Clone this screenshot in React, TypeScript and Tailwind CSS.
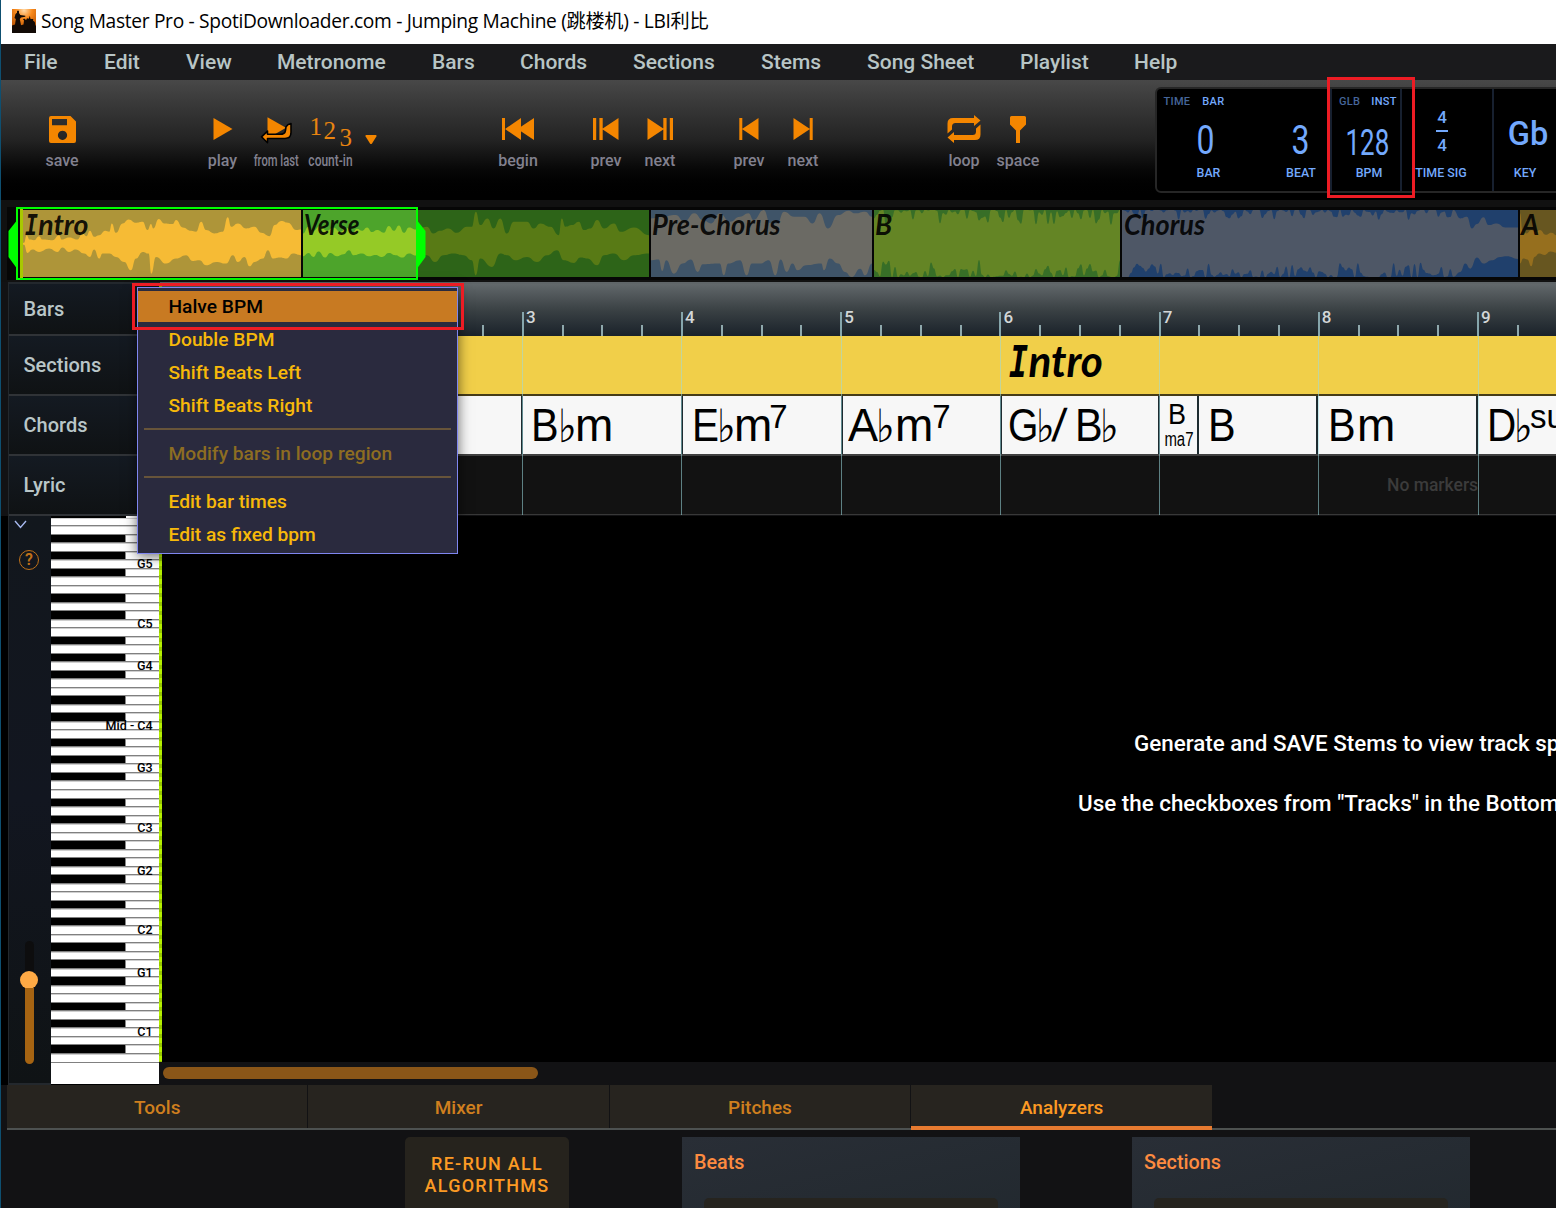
import type { ReactNode } from "react";

/* ---------- toolbar icons ---------- */

const SaveIcon = () => (
  <svg width="27" height="27" viewBox="0 0 27 27" className="fill-[#f48600]">
    <path fillRule="evenodd" d="M2 0h19.5L27 5.5V25a2 2 0 0 1-2 2H2a2 2 0 0 1-2-2V2a2 2 0 0 1 2-2zM3 3v6.3h15V3zM13.5 14.7a4.6 4.6 0 1 0 .01 0z" />
  </svg>
);

const PlayIcon = () => (
  <svg width="20" height="22" viewBox="0 0 20 22" className="fill-[#f48600]">
    <path d="M.5 0 19.5 11 .5 22z" />
  </svg>
);

const FromLastIcon = () => (
  <svg width="36" height="30" viewBox="0 0 36 30">
    <path d="M8.500 3.300 27 13.700 8.500 24.500z" fill="#f48600" />
    <path d="M2.500 22.800 8.500 17.100v3.200h12.500q5 0 5.500-4l.5-3.500q1.500-2.500 5-3.300v9q0 6-6 6H8.500v4.300z" fill="#f48600" stroke="#000" strokeWidth="1.600" strokeLinejoin="round" />
  </svg>
);

const BeginIcon = () => (
  <svg width="32" height="22" viewBox="0 0 32 22" className="fill-[#f48600]">
    <path d="M0 0h3v22H0zM3 11 19 0v22zM15.5 11 32 0v22z" />
  </svg>
);

const PrevSectionIcon = ({ flip = false }: { flip?: boolean }) => (
  <svg width="26" height="22" viewBox="0 0 26 22" className={flip ? "-scale-x-100 fill-[#f48600]" : "fill-[#f48600]"}>
    <path d="M0 0h3.2v22H0zM6.4 0h3.3v22H6.4zM9 11 25.5 0v22z" />
  </svg>
);

const PrevIcon = ({ flip = false }: { flip?: boolean }) => (
  <svg width="20" height="22" viewBox="0 0 20 22" className={flip ? "-scale-x-100 fill-[#f48600]" : "fill-[#f48600]"}>
    <path d="M.3 0h3v22h-3zM3 11 19.5 0v22z" />
  </svg>
);

const LoopIcon = () => (
  <svg width="34" height="28" viewBox="0 0 34 28" className="fill-[#f48600]">
    <path d="M.5 18.500V8.500q0-5.500 5.500-5.500H27V0l6.500 5.500L27 11V8H8.500q-3.500 0-3.500 3.500v3z" />
    <path d="M33.500 9.500v10q0 5.500-5.500 5.500H7v3L.5 22.500 7 17v3h18.500q3.500 0 3.500-3.500v-3z" />
  </svg>
);

const SpaceIcon = () => (
  <svg width="16" height="27" viewBox="0 0 16 27" className="fill-[#f48600]">
    <path d="M1.500 0h13q1.500 0 1.500 1.500V8.500L10 14.500V27H6V14.500L0 8.500V1.500Q0 0 1.500 0z" />
  </svg>
);

const AppIcon = () => (
  <svg width="24" height="24" viewBox="0 0 24 24">
    <defs>
      <radialGradient id="stage" cx="50%" cy="5%" r="85%">
        <stop offset="0" stopColor="#ffd9a8" />
        <stop offset=".4" stopColor="#f98a1c" />
        <stop offset="1" stopColor="#b04a00" />
      </radialGradient>
    </defs>
    <rect width="24" height="24" fill="url(#stage)" />
    <path fill="#120a06" d="M0 24V16.500l3-1 .8-5.500L2.500 9 3.500 5 5 3.800V2.200Q6 .6 7 2.200v1.800L8.300 6l5 .8v1L9 8.500 7.800 10l1.200 6.200 2.500-.7.5-4-1.200-1.500 2-.2 1.200 1.500 1-2 1.800.5 1-3L18.500 10h2.800l-.3 1.500 1.800 1.500.5 3 .7 1V24z" />
  </svg>
);

const Tool = ({ label, icon, squeeze = "" }: { label: string; icon: ReactNode; squeeze?: string }) => (
  <div className="flex w-[54px] flex-col items-center">
    <div className="flex h-[30px] items-center justify-center">{icon}</div>
    <span className={`mt-[7px] text-[16px] leading-[20px] font-medium text-[#82818f] ${squeeze}`}>{label}</span>
  </div>
);

/* ---------- overview waveforms ---------- */

type Pt = [number, number];

const introTop: Pt[] = [[69,130],[75,128],[83,105],[92,118],[105,120],[120,108],[130,118],[160,120],[180,105],[188,118],[210,112],[235,118],[250,100],[262,108],[272,92],[285,110],[300,105],[318,92],[330,95],[338,70],[350,98],[370,70],[388,58],[410,68],[430,65],[445,90],[455,72],[462,85],[478,57],[495,70],[520,72],[530,60],[550,82],[575,92],[590,95],[605,65],[620,90],[645,100],[670,95],[685,52],[695,80],[715,70],[740,85],[765,80],[785,98],[810,108],[825,75],[845,63],[865,68],[890,90],[904,88]];
const introBottom: Pt[] = [[69,132],[75,134],[85,158],[100,148],[120,155],[150,145],[175,155],[190,142],[210,155],[230,148],[255,160],[272,170],[285,148],[300,175],[310,160],[330,160],[350,170],[375,185],[395,210],[410,175],[430,155],[448,160],[456,220],[470,170],[500,190],[530,175],[560,165],[580,182],[600,180],[620,195],[650,185],[680,190],[700,165],[715,185],[735,170],[750,198],[765,185],[790,175],[805,150],[820,175],[840,172],[860,175],[880,160],[904,165]];
const verseTop: Pt[] = [[909,100],[925,80],[940,92],[960,78],[980,92],[1000,82],[1020,95],[1040,84],[1055,102],[1070,86],[1085,92],[1100,82],[1115,96],[1130,90],[1150,98],[1165,78],[1180,92],[1195,76],[1210,98],[1225,82],[1246,88]];
const verseBottom: Pt[] = [[909,168],[925,158],[940,170],[955,154],[975,172],[990,158],[1010,168],[1030,162],[1046,150],[1060,165],[1085,160],[1105,168],[1125,164],[1145,170],[1165,158],[1185,165],[1205,172],[1225,160],[1246,166]];
const verse2Top: Pt[] = [[1248,90],[1280,80],[1300,100],[1320,92],[1345,85],[1370,98],[1400,80],[1415,80],[1427,35],[1440,75],[1462,55],[1480,85],[1500,55],[1520,100],[1540,65],[1580,65],[1600,85],[1620,70],[1650,80],[1675,105],[1684,55],[1695,80],[1715,75],[1735,65],[1750,90],[1770,85],[1790,60],[1810,85],[1840,70],[1860,95],[1900,82],[1945,105]];
const verse2Bottom: Pt[] = [[1248,170],[1280,165],[1305,185],[1330,165],[1360,160],[1390,165],[1415,180],[1427,225],[1440,175],[1475,200],[1500,160],[1520,165],[1545,180],[1580,170],[1610,185],[1640,165],[1670,150],[1690,180],[1720,188],[1740,172],[1760,175],[1790,195],[1810,165],[1840,160],[1870,180],[1900,165],[1945,160]];
const preTop: Pt[] = [[447,55],[480,50],[520,45],[545,65],[575,40],[600,60],[625,70],[650,40],[680,65],[710,50],[735,40],[750,60],[780,30],[800,70],[820,70],[840,35],[870,50],[900,50],[925,70],[945,40],[970,85],[1000,45],[1030,32],[1050,40],[1080,35],[1100,50]];
const preBottom: Pt[] = [[447,180],[470,178],[480,212],[492,180],[515,220],[540,190],[565,178],[585,215],[600,192],[650,190],[662,225],[675,190],[710,180],[730,225],[745,190],[770,190],[795,180],[815,225],[830,178],[848,215],[865,190],[880,210],[905,195],[950,190],[958,210],[975,175],[1000,190],[1020,215],[1040,230],[1065,205],[1080,225],[1100,190]];

const noise = (i: number) => {
  const v = Math.sin(i * 12.9898 + 4.1) * 43758.5453;
  return v - Math.floor(v);
};

/* A loud passage: both edges hug the limits, with short dips. */
const loud = (from: number, to: number, edge: number, dip: number, seed: number): Pt[] => {
  const pts: Pt[] = [];
  for (let x = from, i = seed; x <= to; x += 9, i++) pts.push([x, edge + dip * Math.pow(noise(i), 2.6)]);
  return pts;
};

const bTop = loud(0, 738, 29, 46, 3);
const bBottom = loud(0, 738, 231, -52, 90);
const chorusTop: Pt[] = [...loud(0, 1000, 29, 32, 210), [1020,55],[1040,50],[1055,85],[1070,72],[1090,52],[1105,75],[1130,70],[1156,82],[1194,82]];
const chorusBottom: Pt[] = [...loud(0, 1000, 231, -44, 333), [1020,215],[1035,190],[1050,205],[1070,172],[1090,190],[1115,180],[1140,170],[1160,168],[1194,176]];
const aTop: Pt[] = [[0,40],[8,92],[20,100],[34,90],[48,96],[60,90],[78,104],[95,98],[112,106]];
const aBottom: Pt[] = [[0,190],[10,175],[22,178],[34,198],[44,170],[58,160],[75,164],[92,154],[112,158]];

const smooth = (pts: Pt[]) =>
  pts.map(([x, y], i) => {
    if (i === 0) return `${x} ${y}`;
    const [px, py] = pts[i - 1];
    const mx = (px + x) / 2;
    return `C${mx} ${py} ${mx} ${y} ${x} ${y}`;
  }).join(" ");

const Wave = ({ top, bottom, fill }: { top: Pt[]; bottom: Pt[]; fill: string }) => {
  const x0 = top[0][0];
  const x1 = top[top.length - 1][0];
  return (
    <svg className={`block size-full ${fill}`} viewBox={`${x0} 30 ${x1 - x0} 200`} preserveAspectRatio="none">
      <path d={`M${smooth(top)} L${smooth([...bottom].reverse())}Z`} />
    </svg>
  );
};

const Segment = ({ box, name, nameClass, children }: { box: string; name?: ReactNode; nameClass?: string; children: ReactNode }) => (
  <div className={`relative h-[67px] shrink-0 ${box}`}>
    {children}
    {name && (
      <span className={`absolute top-[-3px] left-[1px] origin-left font-['Lato',sans-serif] text-[28px] leading-[34px] font-bold whitespace-nowrap text-black/90 italic ${nameClass}`}>
        {name}
      </span>
    )}
  </div>
);

const Intro = () => (
  <>
    <span className="inline-block w-[0.46em] -translate-x-[0.06em] scale-x-75 font-['DejaVu_Sans_Mono',monospace] leading-none">I</span>ntro
  </>
);

/* ---------- chord lane ---------- */

const Cap = ({ c, w, squeeze = "scale-x-90" }: { c: string; w: string; squeeze?: string }) => (
  <span className={`${w} shrink-0`}>
    <span className={`inline-block origin-left ${squeeze}`}>{c}</span>
  </span>
);
const Flat = ({ w = "w-[18px]" }: { w?: string }) => (
  <span className={`${w} shrink-0 font-['DejaVu_Sans',sans-serif] leading-none`}>
    <span className="inline-block origin-left -translate-x-[1px] translate-y-[1px] scale-x-[0.860]">♭</span>
  </span>
);
const Sup = ({ children, shift = "-translate-y-[14px]" }: { children: string; shift?: string }) => (
  <span className={`text-[33px] ${shift}`}>{children}</span>
);
const Cell = ({ box, children }: { box: string; children?: ReactNode }) => (
  <div className={`flex h-[58px] shrink-0 items-baseline overflow-hidden border-r-2 border-[#1d2b30] text-[46px] leading-[58px] text-black ${box}`}>
    {children}
  </div>
);

/* ---------- piano ---------- */

const names = ["C", "B", "A#", "A", "G#", "G", "F#", "F", "E", "D#", "D", "C#"];
const keys = Array.from({ length: 64 }, (_, i) => {
  const n = names[i % 12];
  const octave = i % 12 === 0 ? 6 - i / 12 : 5 - Math.floor(i / 12);
  let label = "";
  if (i > 0 && (n === "C" || n === "G")) label = n === "C" && octave === 4 ? "Mid - C4" : `${n}${octave}`;
  return { black: n.includes("#"), label };
});

const Piano = () => (
  <div className="flex h-[568px] w-[108px] flex-col overflow-hidden bg-white">
    <div className="h-[1.500px] w-[75px] shrink-0 bg-black" />
    {keys.map((k, i) => (
      <div key={i} className="flex h-[8.525px] shrink-0 border-b border-[#808080]">
        <div className={k.black ? "w-[75px] border-r border-[#888] bg-black" : "w-[75px] border-t border-[#cfcfcf]"} />
        <div className="flex flex-1 items-center justify-end border-t border-[#cfcfcf] pr-[6.500px]">
          <span className="text-[12.500px] leading-none font-medium whitespace-nowrap text-black">{k.label}</span>
        </div>
      </div>
    ))}
  </div>
);

/* ---------- data ---------- */

const menus: [string, string][] = [
  ["File", "w-[80px]"], ["Edit", "w-[82px]"], ["View", "w-[91px]"], ["Metronome", "w-[155px]"],
  ["Bars", "w-[88px]"], ["Chords", "w-[113px]"], ["Sections", "w-[128px]"], ["Stems", "w-[106px]"],
  ["Song Sheet", "w-[153px]"], ["Playlist", "w-[114px]"], ["Help", "w-[80px]"],
];

const Item = ({ children, tone = "text-[#f7b90a]" }: { children: string; tone?: string }) => (
  <div className="h-[33px] py-px">
    <div className={`flex h-[31px] items-center pt-[2px] pl-[30.500px] ${tone}`}>{children}</div>
  </div>
);
const Divider = () => (
  <div className="flex h-[15px] items-center px-[6px] pb-px">
    <div className="h-[2px] w-full bg-[#67543a]" />
  </div>
);

const LaneLabel = ({ h, children }: { h: string; children: string }) => (
  <div className={`flex items-center border-b-2 border-[#303337] bg-linear-to-b from-[#141a22] to-[#0f1214] pl-[14.500px] text-[20px] font-medium text-[#b9c6c8] ${h}`}>
    {children}
  </div>
);

const Card = ({ title }: { title: string }) => (
  <div className="flex h-[80px] w-[338px] flex-col bg-linear-to-br from-[#292e36] to-[#22292f]">
    <div className="flex h-[51px] shrink-0 items-center pt-px pl-[12px] text-[19.800px] font-medium text-[#fd8b40]">{title}</div>
    <div className="mx-[22px] mt-[10px] h-[30px] rounded-[5px] bg-[#26241f]" />
  </div>
);

const Stat = ({ value, label, box }: { value: ReactNode; label: string; box: string }) => (
  <div className={`flex flex-col items-center ${box}`}>
    <div className="flex h-[56px] items-center">{value}</div>
    <span className="mt-[1px] text-[12.400px] leading-[16px] font-medium whitespace-nowrap">{label}</span>
  </div>
);

export default function App() {
  return (
    <div className="relative h-[1208px] w-[1556px] overflow-hidden border-l border-[#0e4f70] bg-[#121214] font-['Roboto',sans-serif]">
      {/* title bar */}
      <div className="flex h-[44px] items-center bg-white pl-[11px] font-['Open_Sans','Noto_Sans_CJK_TC',sans-serif] text-[19.200px] tracking-[-0.320px] whitespace-nowrap text-black">
        <div className="-mt-[2px]"><AppIcon /></div>
        <span className="-mt-[2px] ml-[5px]">Song Master Pro - SpotiDownloader.com - Jumping Machine (跳楼机) - LBI利比</span>
      </div>

      {/* menu bar */}
      <div className="flex h-[36px] items-center bg-[#1a1a1c] pt-[2px] pl-[23px] text-[21px] font-medium whitespace-nowrap text-[#b8c5c5]">
        {menus.map(([m, w]) => <span key={m} className={w}>{m}</span>)}
      </div>

      {/* transport */}
      <div className="flex h-[120px] bg-linear-to-b from-[#484848] via-[#232323] to-black whitespace-nowrap">
        <div className="mt-[34px] ml-[34px] flex">
          <Tool label="save" icon={<SaveIcon />} />
          <div className="w-[106.500px]" />
          <Tool label="play" icon={<PlayIcon />} />
          <Tool label="from last" icon={<FromLastIcon />} squeeze="scale-x-[0.700]" />
          <Tool
            label="count-in"
            squeeze="scale-x-[0.750]"
            icon={
              <div className="flex font-['Liberation_Serif',serif] text-[25px] leading-[30px] text-[#e88410]">
                <span className="w-[14px] -translate-y-[2px]">1</span>
                <span className="w-[16px] translate-y-[2px]">2</span>
                <span className="w-[12px] translate-y-[9px]">3</span>
              </div>
            }
          />
          <div className="flex w-[27px] justify-center pt-[21px]">
            <svg width="12" height="9" viewBox="0 0 12 9" className="fill-[#f48600]">
              <path d="M1.200 0h9.600q1.200.4.6 1.600L7 8.400q-1 1-2 0L.6 1.600Q0 .4 1.200 0z" />
            </svg>
          </div>
          <div className="w-[106.500px]" />
          <Tool label="begin" icon={<BeginIcon />} />
          <div className="w-[34px]" />
          <Tool label="prev" icon={<PrevSectionIcon />} />
          <Tool label="next" icon={<PrevSectionIcon flip />} />
          <div className="w-[35px]" />
          <Tool label="prev" icon={<PrevIcon />} />
          <Tool label="next" icon={<PrevIcon flip />} />
          <div className="w-[107px]" />
          <Tool label="loop" icon={<LoopIcon />} />
          <Tool label="space" icon={<SpaceIcon />} />
        </div>

        {/* read-out */}
        <div className="mt-[7px] ml-[110px] flex h-[106px] w-[460px] shrink-0 rounded-[6px] border-2 border-[#262626] bg-black text-[#73a9fd]">
          <div className="w-[175px] shrink-0 border-r-2 border-[#17202f]">
            <div className="flex gap-[12px] pt-[6px] pl-[6.500px] text-[11px] leading-[13px] font-medium tracking-[0.300px]">
              <span className="text-[#46669b]">TIME</span><span>BAR</span>
            </div>
            <div className="flex">
              <Stat box="w-[98px] ml-[2.500px] shrink-0" label="BAR" value={<span className="-translate-x-[3px] translate-y-[5px] scale-x-[0.780] text-[41px]">0</span>} />
              <Stat box="w-[87px] shrink-0" label="BEAT" value={<span className="translate-y-[5px] scale-x-[0.780] text-[41px]">3</span>} />
            </div>
          </div>
          <div className="w-[70px] shrink-0 border-r-2 border-[#17202f]">
            <div className="flex gap-[11px] pt-[6px] pl-[7px] text-[11px] leading-[13px] font-medium tracking-[0.300px]">
              <span className="text-[#46669b]">GLB</span><span>INST</span>
            </div>
            <Stat box="w-[74px]" label="BPM" value={<span className="-translate-x-[2px] translate-y-[7px] scale-x-[0.720] text-[36px]">128</span>} />
          </div>
          <div className="w-[92px] shrink-0 border-r-2 border-[#17202f] pt-[19px]">
            <Stat
              box="w-[78px]"
              label="TIME SIG"
              value={
                <div className="flex translate-x-[1px] -translate-y-[5px] flex-col items-center text-[17px] leading-[26px] font-medium">
                  <span>4</span><div className="h-[1.500px] w-[12px] bg-[#73a9fd]" /><span>4</span>
                </div>
              }
            />
          </div>
          <div className="pt-[19px]">
            <Stat box="w-[62px]" label="KEY" value={<span className="translate-x-[3px] -translate-y-[2px] text-[32.500px] font-medium">Gb</span>} />
          </div>
        </div>
      </div>

      {/* song overview */}
      <div className="relative h-[82px] bg-[#111111] pt-[7px] pl-[6px]">
        <div className="flex h-[73px] items-center bg-[#060606] pl-[14px]">
          <Segment box="ml-[1px] w-[279px] bg-[#ae9539]" name={<Intro />} nameClass="ml-[2px] scale-x-[1.020]"><Wave top={introTop} bottom={introBottom} fill="fill-[#f6bb35]" /></Segment>
          <Segment box="ml-[2px] w-[113px] bg-[#4da42b]" name="Verse" nameClass="scale-x-[0.860]"><Wave top={verseTop} bottom={verseBottom} fill="fill-[#95ca26]" /></Segment>
          <Segment box="w-[233px] bg-[#2d6418]"><Wave top={verse2Top} bottom={verse2Bottom} fill="fill-[#587a15]" /></Segment>
          <Segment box="ml-[2px] w-[221px] bg-[#3f5468]" name="Pre-Chorus" nameClass="scale-x-[0.970]"><Wave top={preTop} bottom={preBottom} fill="fill-[#6b6a64]" /></Segment>
          <Segment box="ml-[2px] w-[246px] bg-[#376e27]" name="B" nameClass=""><Wave top={bTop} bottom={bBottom} fill="fill-[#648525]" /></Segment>
          <Segment box="ml-[2px] w-[396px] bg-[#20406c]" name="Chorus" nameClass="ml-[1px] scale-x-[0.970]"><Wave top={chorusTop} bottom={chorusBottom} fill="fill-[#4e5766]" /></Segment>
          <Segment box="ml-[2px] w-[37px] bg-[#675620]" name="A" nameClass=""><Wave top={aTop} bottom={aBottom} fill="fill-[#966f1e]" /></Segment>
        </div>
        {/* loop region */}
        <div className="absolute top-[7px] left-[15px] h-[73px] w-[402px] border-2 border-[#00ff00]">
          <div className="ml-[2px] h-full w-[3px] bg-[#a8c800]" />
        </div>
        <svg className="absolute top-[19px] left-[7px] fill-[#00ff00]" width="10" height="51" viewBox="0 0 10 51"><path d="M10 0V51L.5 38V12z" /></svg>
        <svg className="absolute top-[19px] left-[415px] fill-[#00ff00]" width="10" height="51" viewBox="0 0 10 51"><path d="M0 0V51L9.500 38V12z" /></svg>
      </div>

      {/* lanes */}
      <div className="flex h-[234px]">
        <div className="ml-[7px] w-[152px] shrink-0 border-t-2 border-l border-[#23282d]">
          <LaneLabel h="h-[52px]">Bars</LaneLabel>
          <LaneLabel h="h-[60px]">Sections</LaneLabel>
          <LaneLabel h="h-[60px]">Chords</LaneLabel>
          <LaneLabel h="h-[60px]">Lyric</LaneLabel>
        </div>
        <div className="relative w-[1400px] shrink-0 overflow-hidden">
          {/* ruler */}
          <div className="flex h-[54px] border-t-2 border-[#5f6568] bg-linear-to-b from-[#62686b] via-[#3a4144] to-[#1a222a]">
            <div className="h-px w-[43.500px] shrink-0" />
            {[1, 2, 3, 4, 5, 6, 7, 8, 9].map((n) => (
              <div key={n} className="flex w-[159.200px] shrink-0 items-end">
                <div className="flex h-[24px] w-[39.800px] border-l-2 border-[#86a6ac] pl-[2px] text-[17px] leading-[10px] font-medium text-[#d3d7d8]">{n}</div>
                <div className="h-[11px] w-[39.800px] border-l-2 border-[#8fa8ac]" />
                <div className="h-[11px] w-[39.800px] border-l-2 border-[#8fa8ac]" />
                <div className="h-[11px] w-[39.800px] border-l-2 border-[#8fa8ac]" />
              </div>
            ))}
          </div>
          {/* sections */}
          <div className="flex h-[60px] border-b-2 border-[#463c18] bg-[#f1cf49]">
            <span className="-mt-[2px] ml-[848.500px] origin-left scale-x-[0.960] font-['Lato',sans-serif] text-[44px] leading-[52px] font-bold text-black italic"><Intro /></span>
          </div>
          {/* chords */}
          <div className="flex h-[60px] border-b-2 border-[#404040] bg-[#f7f7f7] font-['Liberation_Sans',sans-serif]">
            <Cell box="w-[363px]" />
            <Cell box="w-[160px] pl-[8px]"><Cap c="B" w="w-[27.500px]" /><Flat w="w-[16.500px]" />m</Cell>
            <Cell box="w-[160px] pl-[9px]"><Cap c="E" w="w-[26px]" squeeze="scale-x-[0.880]" /><Flat w="w-[16px]" />m<Sup shift="-translate-x-[3px] -translate-y-[13px]">7</Sup></Cell>
            <Cell box="w-[159px] pl-[5px]"><Cap c="A" w="w-[29px]" squeeze="scale-x-[0.980]" /><Flat w="w-[18px]" />m<Sup shift="-translate-x-[1px] -translate-y-[13px]">7</Sup></Cell>
            <Cell box="w-[158px] pl-[6px]"><Cap c="G" w="w-[29px]" squeeze="scale-x-[0.850]" /><Flat w="w-[16px]" /><span className="w-[22px] -skew-x-6">/</span><Cap c="B" w="w-[26px]" /><Flat /></Cell>
            <Cell box="w-[39px]">
              <span className="flex h-[58px] w-full flex-col items-center self-start">
                <span className="mt-[6px] h-[24px] -translate-x-[1px] scale-x-90 text-[30px] leading-[24px]">B</span>
                <span className="h-[24px] scale-x-[0.730] text-[20.500px] leading-[25px]">ma7</span>
              </span>
            </Cell>
            <Cell box="w-[119px] pl-[9px]"><Cap c="B" w="w-[27px]" /></Cell>
            <Cell box="w-[160px] pl-[10px]"><Cap c="B" w="w-[29px]" />m</Cell>
            <Cell box="w-[159px] pl-[9px]"><Cap c="D" w="w-[28px]" squeeze="scale-x-[0.880]" /><Flat w="w-[15px]" /><Sup shift="-translate-y-[13px]">sus</Sup></Cell>
          </div>
          {/* lyric */}
          <div className="flex h-[59px] items-center border-b border-[#383838] bg-[#121212] pt-px">
            <span className="ml-[1227px] text-[17.500px] font-medium whitespace-nowrap text-[#3b3b3b]">No markers</span>
          </div>
          {/* bar lines over the three lanes */}
          <div className="absolute top-[54px] left-[43.500px] flex h-[179px]">
            {[1, 2, 3, 4, 5, 6, 7, 8, 9].map((n) => (
              <div key={n} className="w-[159.250px] shrink-0 border-l border-[#9adbe0]/55" />
            ))}
          </div>
        </div>
      </div>

      {/* piano roll */}
      <div className="flex h-[569px] bg-black">
        <div className="ml-[7px] flex w-[43px] shrink-0 flex-col items-center border-b-2 border-l border-[#23282d] bg-linear-to-b from-[#12171d] via-[#121620] to-[#0f1315] pr-[2px]">
          <svg className="mt-[4px] mr-[17px]" width="13" height="9" viewBox="0 0 13 9"><path d="m1 1 5.500 6.500L12 1" fill="none" stroke="#a7b9ef" strokeWidth="1.400" /></svg>
          <div className="mt-[21px] flex size-[20px] items-center justify-center rounded-full border-[1.500px] border-[#bf7119] text-[16px] leading-none font-semibold text-[#bf7119]">?</div>
          <div className="mt-[371px] h-[30px] w-[9px] shrink-0 rounded-t-full bg-[#0d0d0e]" />
          <div className="size-[18px] shrink-0 rounded-full bg-[#ffaa45]" />
          <div className="-mt-[1px] h-[76px] w-[9px] shrink-0 rounded-b-full bg-[#a66412]" />
        </div>
        <Piano />
        <div className="flex min-w-0 flex-1 flex-col">
          <div className="flex h-[546px] flex-1">
            <div className="w-[3px] shrink-0 bg-[repeating-linear-gradient(#b4f000_0_5px,#98c800_5px_9px)]" />
            <div className="flex-1 overflow-hidden pt-[212px] text-[22.400px] leading-[30px] font-medium whitespace-nowrap text-white">
              <div className="ml-[972px]">Generate and SAVE Stems to view track spe</div>
              <div className="mt-[30px] ml-[916px]">Use the checkboxes from "Tracks" in the Bottom</div>
            </div>
          </div>
          <div className="flex h-[23px] bg-[#121214] pt-[5px] pl-[4px]">
            <div className="h-[12px] w-[375px] rounded-full bg-[#8a5618]" />
          </div>
        </div>
      </div>

      {/* tabs */}
      <div className="ml-[6px] flex h-[45px] border-b-2 border-[#4d5150] text-[19px] font-medium text-[#cf7f1e]">
        {["Tools", "Mixer", "Pitches"].map((t) => (
          <div key={t} className="flex w-[301.400px] items-center justify-center border-r border-[#121214] bg-[#27241f] pt-[4px]">{t}</div>
        ))}
        <div className="-mb-[2px] flex w-[301px] items-center justify-center border-b-4 border-[#e87b30] bg-[#27241f] pt-[6px] text-[#fc9a24]">Analyzers</div>
      </div>

      {/* analyzers */}
      <div className="flex pt-[7px]">
        <div className="ml-[404px] h-[80px] w-[164px] rounded-[5px] bg-[#26231d] pt-[16px] text-center text-[18px] leading-[22px] font-medium tracking-[1.250px] text-[#fc9a24]">
          RE-RUN ALL<br />ALGORITHMS
        </div>
        <div className="ml-[113px]"><Card title="Beats" /></div>
        <div className="ml-[112px]"><Card title="Sections" /></div>
      </div>

      {/* playhead above the ruler */}
      <div className="absolute top-[283px] left-[158px] h-[4px] w-[3px] bg-[#a8c800]" />

      {/* context menu */}
      <div className="absolute top-[287px] left-[136px] h-[267px] w-[321px] border border-[#7f86f0] bg-[#2a2a3e] pt-[2px] text-[19.200px] font-medium whitespace-nowrap shadow-[0_2px_12px_rgba(0,0,0,0.6)]">
        <Item tone="bg-[#c87a22] text-black">Halve BPM</Item>
        <Item>Double BPM</Item>
        <Item>Shift Beats Left</Item>
        <Item>Shift Beats Right</Item>
        <Divider />
        <Item tone="text-[#8d6d22]">Modify bars in loop region</Item>
        <Divider />
        <Item>Edit bar times</Item>
        <Item>Edit as fixed bpm</Item>
      </div>

      {/* callouts */}
      <div className="absolute top-[77px] left-[1326px] h-[121px] w-[88px] border-3 border-[#ed1c24]" />
      <div className="absolute top-[283px] left-[131px] h-[47px] w-[332px] border-3 border-[#ed1c24]" />
    </div>
  );
}
